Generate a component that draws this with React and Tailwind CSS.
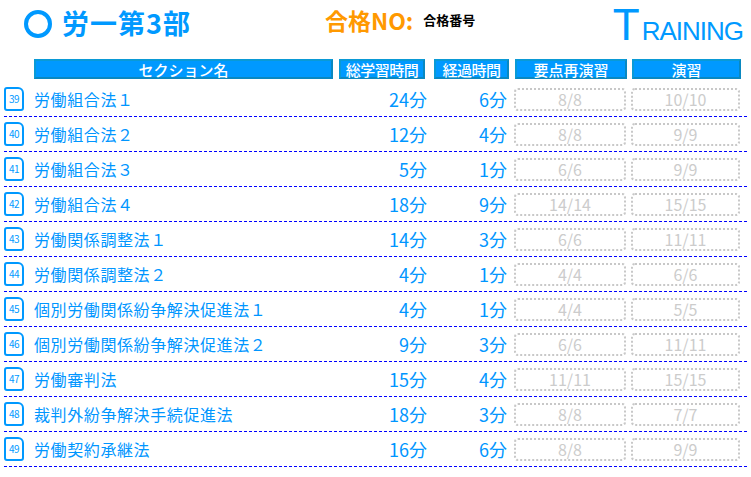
import React from 'react';

const rows = [
  { no: 39, name: '労働組合法１', total: 24, elapsed: 6, a: '8/8', b: '10/10' },
  { no: 40, name: '労働組合法２', total: 12, elapsed: 4, a: '8/8', b: '9/9' },
  { no: 41, name: '労働組合法３', total: 5, elapsed: 1, a: '6/6', b: '9/9' },
  { no: 42, name: '労働組合法４', total: 18, elapsed: 9, a: '14/14', b: '15/15' },
  { no: 43, name: '労働関係調整法１', total: 14, elapsed: 3, a: '6/6', b: '11/11' },
  { no: 44, name: '労働関係調整法２', total: 4, elapsed: 1, a: '4/4', b: '6/6' },
  { no: 45, name: '個別労働関係紛争解決促進法１', total: 4, elapsed: 1, a: '4/4', b: '5/5' },
  { no: 46, name: '個別労働関係紛争解決促進法２', total: 9, elapsed: 3, a: '6/6', b: '11/11' },
  { no: 47, name: '労働審判法', total: 15, elapsed: 4, a: '11/11', b: '15/15' },
  { no: 48, name: '裁判外紛争解決手続促進法', total: 18, elapsed: 3, a: '8/8', b: '7/7' },
  { no: 49, name: '労働契約承継法', total: 16, elapsed: 6, a: '8/8', b: '9/9' },
];

const jp = { fontFamily: '"Noto Sans CJK JP", "Noto Sans", sans-serif' };

function HeaderCell({ className, children }) {
  return (
    <div
      className={`flex h-[20px] items-center justify-center border-2 border-t-[#0a9ad6] border-l-[#0a9ad6] border-r-[#0a88c0] border-b-[#0a88c0] bg-[#0099ff] text-[15px] font-medium leading-none text-white ${className}`}
    >
      {children}
    </div>
  );
}

export default function App() {
  return (
    <div className="h-[477px] w-[751px] overflow-hidden bg-white" style={jp}>
      <div className="flex h-[59px] items-start">
        <div className="ml-[24px] mt-[10px] h-[28px] w-[28px] rounded-full border-[4px] border-[#0099ff]" />
        <div className="ml-[10px] mt-[5px] text-[27px] font-bold leading-[36px] tracking-[1px] text-[#0099ff]">労一第3部</div>
        <div className="ml-[134px] mt-[4px] text-[23px] font-bold leading-[32px] text-[#ff9900]">合格NO:</div>
        <div className="ml-[10px] mt-[10px] text-[13px] font-bold leading-[20px] text-black">合格番号</div>
        <div
          className="ml-auto mr-[8px] flex items-baseline text-[#0099ff]"
          style={{ fontFamily: '"Liberation Sans", Arial, sans-serif' }}
        >
          <span className="text-[44px] leading-[50px]">T</span>
          <span className="ml-[2px] text-[26px] leading-[30px] tracking-[-1px]">RAINING</span>
        </div>
      </div>

      <div className="flex pl-[34px]">
        <HeaderCell className="w-[299px]">セクション名</HeaderCell>
        <HeaderCell className="ml-[6px] w-[86px] tracking-[-0.5px]">総学習時間</HeaderCell>
        <HeaderCell className="ml-[9px] w-[75px] tracking-[-0.5px]">経過時間</HeaderCell>
        <HeaderCell className="ml-[6px] w-[112px]">要点再演習</HeaderCell>
        <HeaderCell className="ml-[5px] w-[109px]">演習</HeaderCell>
      </div>

      <div className="mt-[3px]">
        {rows.map((r) => (
          <div
            key={r.no}
            className="mx-[4px] flex h-[35px] items-center border-b border-dashed border-[#0000ff]"
          >
            <div className="flex h-[24px] w-[20px] items-center justify-center rounded-[3px] rounded-tr-[6px] border-2 border-[#0099ff] text-[10px] leading-none tracking-[-0.5px] text-[#0099ff]">
              {r.no}
            </div>
            <div className="ml-[10px] w-[299px] text-[16px] leading-none tracking-[0.6px] text-[#0096ff]">
              {r.name}
            </div>
            <div className="ml-[6px] w-[88px] text-right text-[18px] leading-none text-[#0096ff]">
              {r.total}分
            </div>
            <div className="ml-[7px] w-[73px] text-right text-[18px] leading-none text-[#0096ff]">
              {r.elapsed}分
            </div>
            <div className="ml-[7px] flex h-[23px] w-[112px] items-center justify-center rounded-[4px] border-2 border-dotted border-[#c8c8c8] text-[16px] leading-none text-[#cccccc]">
              {r.a}
            </div>
            <div className="ml-[5px] flex h-[23px] w-[109px] items-center justify-center rounded-[4px] border-2 border-dotted border-[#c8c8c8] text-[16px] leading-none text-[#cccccc]">
              {r.b}
            </div>
          </div>
        ))}
      </div>
    </div>
  );
}
